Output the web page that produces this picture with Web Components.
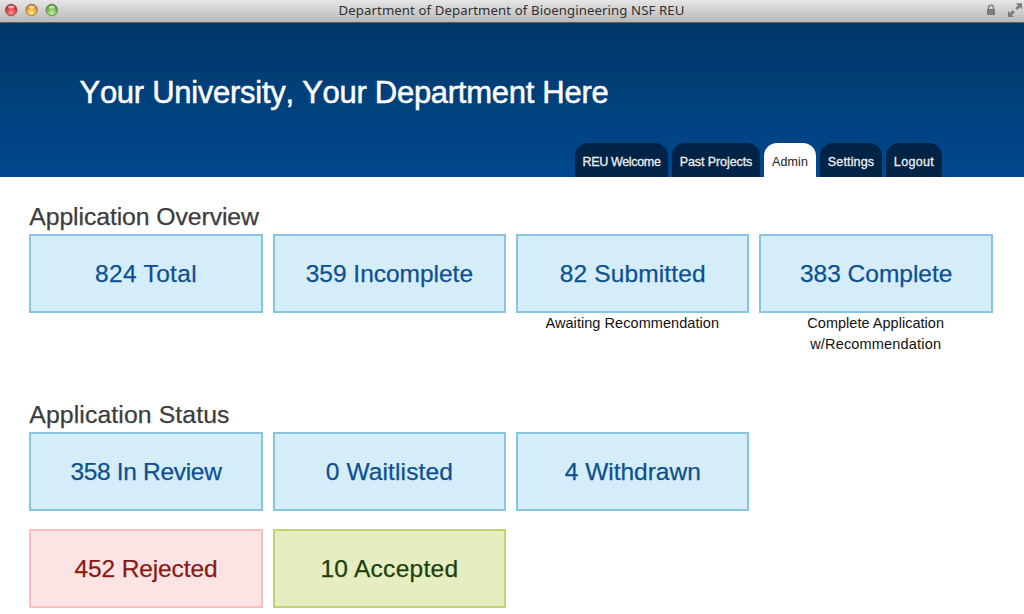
<!DOCTYPE html>
<html lang="en">
<head>
<meta charset="utf-8">
<title>Department of Department of Bioengineering NSF REU</title>
<style>
html, body { margin: 0; height: 614px; overflow: hidden; background: #fff; }
body { font-family: "Liberation Sans", Arial, sans-serif; }
</style>
</head>
<body>
<reu-window>
  <window-bar slot="bar">Department of Department of Bioengineering NSF REU</window-bar>
  <site-header slot="header">
    <span slot="title">Your University, Your Department Here</span>
    <nav-tab style="width:93px;--ls:-.33px">REU Welcome</nav-tab>
    <nav-tab style="width:88px;--ls:-.09px">Past Projects</nav-tab>
    <nav-tab active style="width:52px;--ls:.08px">Admin</nav-tab>
    <nav-tab style="width:62px;--ls:.14px">Settings</nav-tab>
    <nav-tab style="width:56px;--ls:.35px">Logout</nav-tab>
  </site-header>
  <stat-section style="height:197.6px;--ls:-.1px">
    <span slot="heading">Application Overview</span>
    <stat-card style="--ls:.33px">824 Total</stat-card>
    <stat-card style="--ls:-.02px">359 Incomplete</stat-card>
    <stat-card style="--ls:.14px">82 Submitted<span slot="note" style="letter-spacing:.06px">Awaiting Recommendation</span></stat-card>
    <stat-card style="--ls:-.02px">383 Complete<span slot="note" style="letter-spacing:.02px">Complete Application</span><span slot="note" style="letter-spacing:.18px">w/Recommendation</span></stat-card>
  </stat-section>
  <stat-section style="--ls:.1px">
    <span slot="heading">Application Status</span>
    <stat-card style="--ls:-.32px">358 In Review</stat-card>
    <stat-card style="--ls:.13px">0 Waitlisted</stat-card>
    <stat-card style="--ls:-.02px">4 Withdrawn</stat-card>
    <stat-card kind="bad" style="--ls:-.13px;grid-column:1">452 Rejected</stat-card>
    <stat-card kind="good" style="--ls:.28px">10 Accepted</stat-card>
  </stat-section>
</reu-window>

<script>
const define = (name, html) => customElements.define(name, class extends HTMLElement {
  constructor() {
    super();
    const t = document.createElement('template');
    t.innerHTML = html;
    this.attachShadow({ mode: 'open' }).append(t.content.cloneNode(true));
  }
});

define('reu-window', `
<style>
:host { display: flex; flex-direction: column; width: 1024px; height: 614px; overflow: hidden; background: #fff; }
main { padding: 24px 0 0 29.3px; }
</style>
<slot name="bar"></slot><slot name="header"></slot><main><slot></slot></main>`);

define('window-bar', `
<style>
:host { display: grid; grid-template-columns: 1fr auto 1fr; align-items: center; box-sizing: border-box;
  height: 23px; flex: none; padding: 0 5px 2px 4px; background: linear-gradient(#e6e6e6, #b9b9b9 22px);
  border-bottom: 1px solid #5f5f5f; color: #303030; }
.title { font: 13.2px/20px "Noto Sans", sans-serif; letter-spacing: .1px; white-space: nowrap; }
svg { display: block; }
.right { display: flex; justify-content: flex-end; margin-right: -3px; }
</style>
<svg width="60" height="20" viewBox="4 0 60 20">
  <defs>
    <radialGradient id="r" cx=".5" cy=".75" r=".7"><stop offset="0" stop-color="#ff9a9a"/><stop offset=".55" stop-color="#e8444a"/><stop offset="1" stop-color="#a32a30"/></radialGradient>
    <radialGradient id="y" cx=".5" cy=".75" r=".7"><stop offset="0" stop-color="#ffe58c"/><stop offset=".55" stop-color="#f2ad3c"/><stop offset="1" stop-color="#a97023"/></radialGradient>
    <radialGradient id="g" cx=".5" cy=".75" r=".7"><stop offset="0" stop-color="#c4f0a0"/><stop offset=".55" stop-color="#7fc257"/><stop offset="1" stop-color="#4c8235"/></radialGradient>
  </defs>
  <g stroke-width=".8">
    <circle cx="11.2" cy="10" r="5.8" fill="url(#r)" stroke="#8c4344"/>
    <circle cx="31.6" cy="10" r="5.8" fill="url(#y)" stroke="#94703c"/>
    <circle cx="51.8" cy="10" r="5.8" fill="url(#g)" stroke="#5c8049"/>
  </g>
  <g fill="#fff" opacity=".6"><ellipse cx="11.2" cy="7" rx="3" ry="1.5"/><ellipse cx="31.6" cy="7" rx="3" ry="1.5"/><ellipse cx="51.8" cy="7" rx="3" ry="1.5"/></g>
</svg>
<span class="title"><slot></slot></span>
<div class="right"><svg width="40" height="20" viewBox="982 0 40 20">
  <path d="M988.5 9.5V7.6a2.5 2.5 0 0 1 5 0V9.5" fill="none" stroke="#777" stroke-width="1.3"/>
  <rect x="987" y="9" width="8" height="6" rx=".6" fill="#777"/><path d="M988 11h6M988 13h6" stroke="#8d8d8d" stroke-width=".7"/>
  <path d="M1016 3.2h6v6l-2-2-2.7 2.7-2-2 2.7-2.7zM1008 11l2 2 2.7-2.7 2 2-2.7 2.7 2 2h-6z" fill="#7c7c7c"/>
</svg></div>`);

define('site-header', `
<style>
:host { display: flex; flex-direction: column; justify-content: space-between; height: 154px; flex: none;
  background: linear-gradient(#003869, #00488f); }
h1 { margin: 0; padding: 52px 0 0 79.5px; font-size: 31px; line-height: 36px; font-weight: 400; letter-spacing: -.28px;
  font-kerning: none; color: #fff; -webkit-text-stroke: .5px #fff; white-space: nowrap; }
nav { display: flex; gap: 4px; padding-left: 575px; }
</style>
<h1><slot name="title"></slot></h1><nav><slot></slot></nav>`);

define('nav-tab', `
<style>
:host { display: block; box-sizing: border-box; height: 34px; border-radius: 13px 13px 0 0; background: #012346;
  color: #eee; font-size: 12.5px; line-height: 38px; text-align: center; letter-spacing: var(--ls, 0);
  -webkit-text-stroke: .3px #eee; white-space: nowrap; }
:host([active]) { background: #fff; color: #222; -webkit-text-stroke: 0; }
</style>
<slot></slot>`);

define('stat-section', `
<style>
:host { display: block; }
h2 { margin: 0 0 3px; height: 30px; font-size: 24.8px; line-height: 31px; font-weight: 400; letter-spacing: var(--ls, 0);
  color: #3c3c3c; -webkit-text-stroke: .25px #3c3c3c; white-space: nowrap; }
.grid { display: grid; grid-template-columns: repeat(4, 233.4px); column-gap: 10px; row-gap: 18.3px; }
</style>
<h2><slot name="heading"></slot></h2><div class="grid"><slot></slot></div>`);

define('stat-card', `
<style>
:host { display: block; --bg: #d4edf8; --edge: #87c5e0; --ink: #0e5092; }
:host([kind=bad]) { --bg: #fde4e4; --edge: #fcbebf; --ink: #8a1a12; }
:host([kind=good]) { --bg: #e6eec1; --edge: #c1d272; --ink: #1c3f0c; }
.box { box-sizing: border-box; height: 79px; border: 2px solid var(--edge); background: var(--bg); color: var(--ink);
  font-size: 24.5px; line-height: 76px; text-align: center; letter-spacing: var(--ls, 0); -webkit-text-stroke: .25px var(--ink);
  white-space: nowrap; }
.note { display: flex; flex-direction: column; align-items: center; font-size: 14.5px; line-height: 21px; color: #111;
  padding-right: 1px; }
</style>
<div class="box"><slot></slot></div><div class="note"><slot name="note"></slot></div>`);
</script>
</body>
</html>
